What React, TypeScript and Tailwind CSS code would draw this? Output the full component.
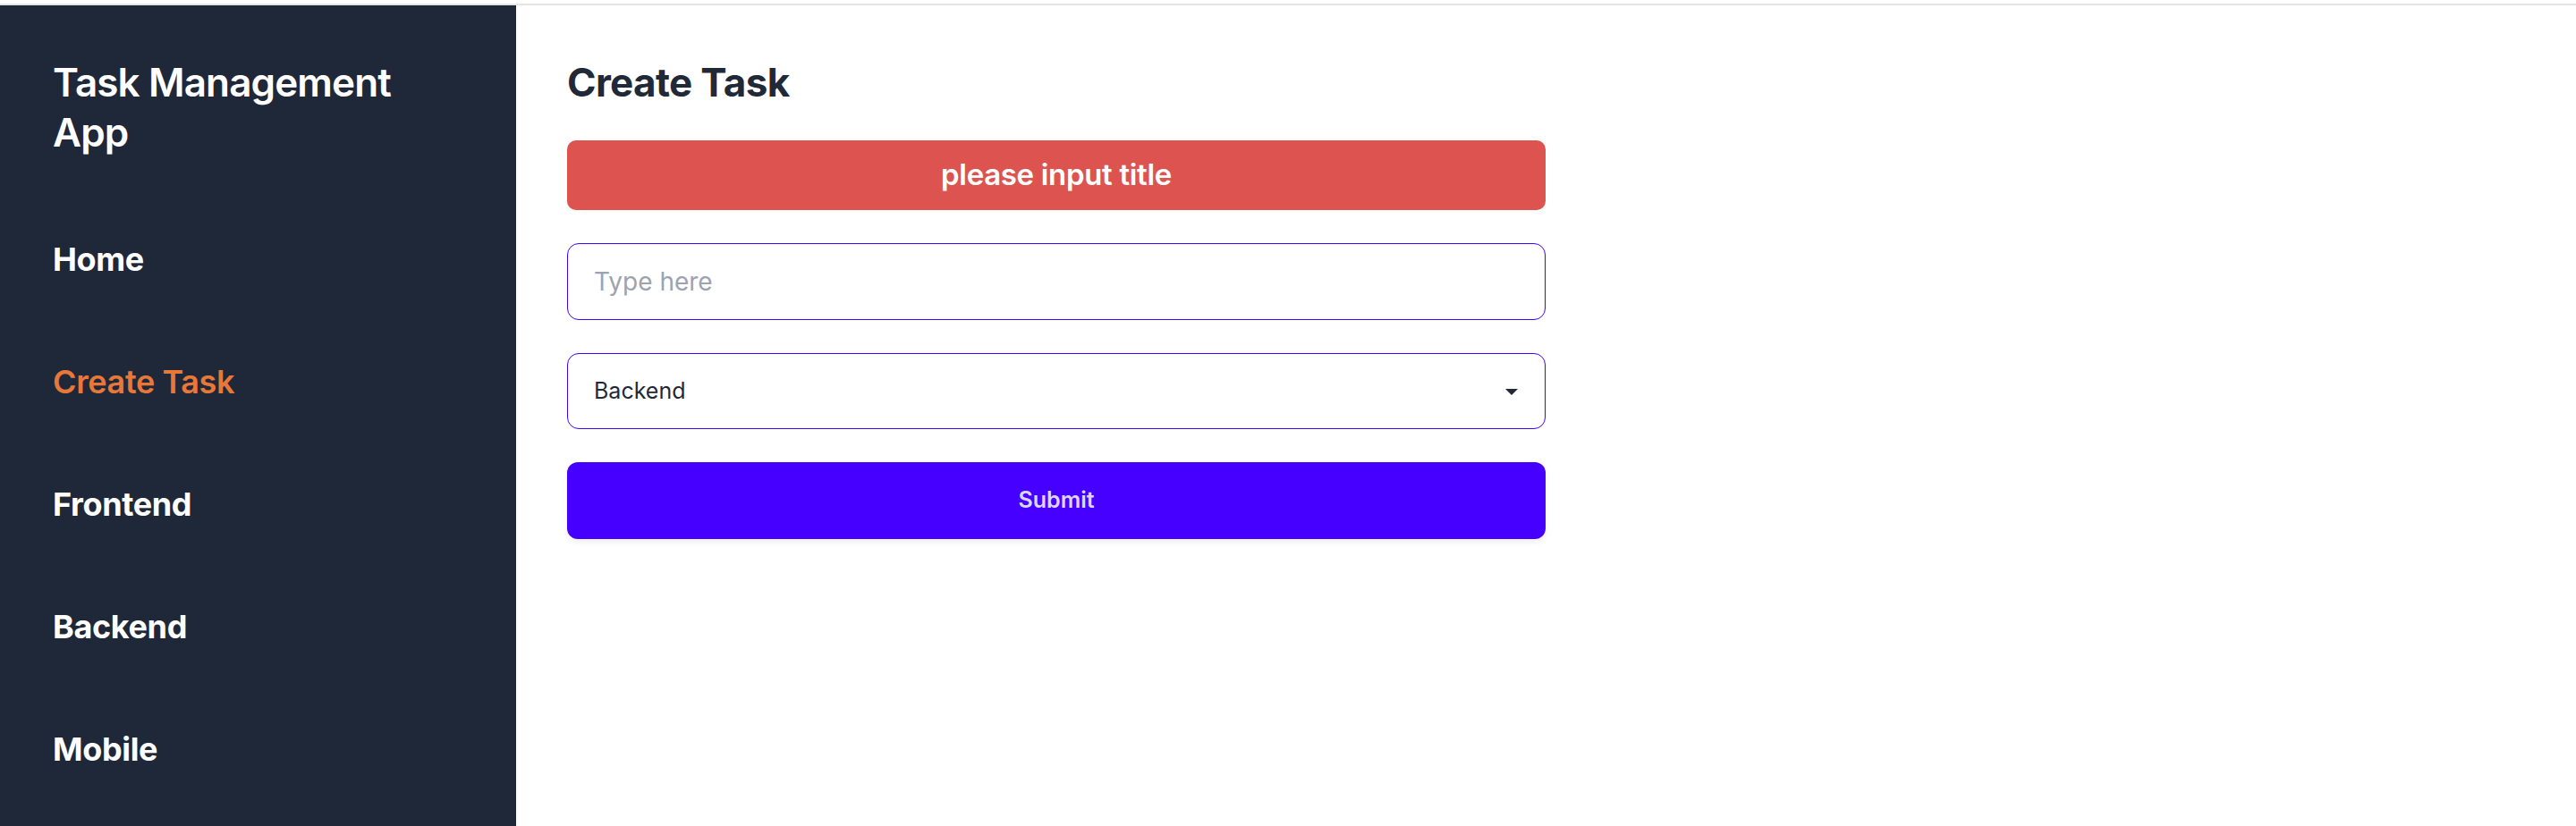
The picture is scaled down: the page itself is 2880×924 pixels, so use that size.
import { useState } from "react";

const links = ["Home", "Create Task", "Frontend", "Backend", "Mobile"];

export default function App() {
  const [title, setTitle] = useState("");
  const [category, setCategory] = useState("Backend");

  return (
    <div className="flex h-[924px] w-full flex-col overflow-hidden bg-white font-['Inter',sans-serif]">
      {/* top strip */}
      <div className="h-[4px] bg-white" />
      <div className="h-[2px] bg-[#e4e4e4]" />

      <div className="flex flex-1">
        {/* sidebar */}
        <aside className="w-[577px] shrink-0 bg-[#1f2839] pl-[59px] pt-[58px]">
          <h1 className="w-[420px] text-[44px] font-semibold leading-[56px] tracking-[-0.02em] text-white">
            Task Management App
          </h1>
          <ul className="mt-[92px] flex flex-col gap-[93px]">
            {links.map((l) => (
              <li
                key={l}
                className={`text-[36px] leading-[44px] tracking-[-0.01em] ${
                  l === "Create Task" ? "font-semibold text-[#e8783a]" : "font-bold text-white"
                }`}
              >
                {l}
              </li>
            ))}
          </ul>
        </aside>

        {/* content */}
        <main className="flex-1 pl-[57px] pt-[58px]">
          <h2 className="text-[44px] font-bold leading-[56px] tracking-[-0.015em] text-[#1f2937]">Create Task</h2>

          <form className="mt-[37px] flex w-[1094px] flex-col gap-[37px]" onSubmit={(e) => e.preventDefault()}>
            <div className="flex h-[78px] items-center justify-center rounded-[10px] bg-[#dd534f] text-[33px] font-semibold tracking-[-0.01em] text-white">
              please input title
            </div>

            <input
              value={title}
              onChange={(e) => setTitle(e.target.value)}
              placeholder="Type here"
              className="h-[86px] rounded-[13px] border border-[#4400ff] px-[29px] text-[28px] text-[#1f2937] outline-none placeholder:text-[#9ca3af]"
            />

            <div className="relative">
              <select
                value={category}
                onChange={(e) => setCategory(e.target.value)}
                className="h-[85px] w-full appearance-none rounded-[13px] border border-[#4400ff] bg-white px-[29px] text-[25px] text-[#1f2937] outline-none"
              >
                <option>Frontend</option>
                <option>Backend</option>
                <option>Mobile</option>
              </select>
              <svg
                className="pointer-events-none absolute right-[31px] top-[40px]"
                width="14"
                height="7"
                viewBox="0 0 14 7"
              >
                <path d="M0 0h14L7 7z" fill="#1f2937" />
              </svg>
            </div>

            <button
              type="submit"
              className="h-[86px] rounded-[12px] bg-[#4600ff] text-[25px] font-semibold text-[#dad6ff] shadow-[0_4px_6px_rgba(0,0,0,0.06)]"
            >
              Submit
            </button>
          </form>
        </main>
      </div>
    </div>
  );
}
